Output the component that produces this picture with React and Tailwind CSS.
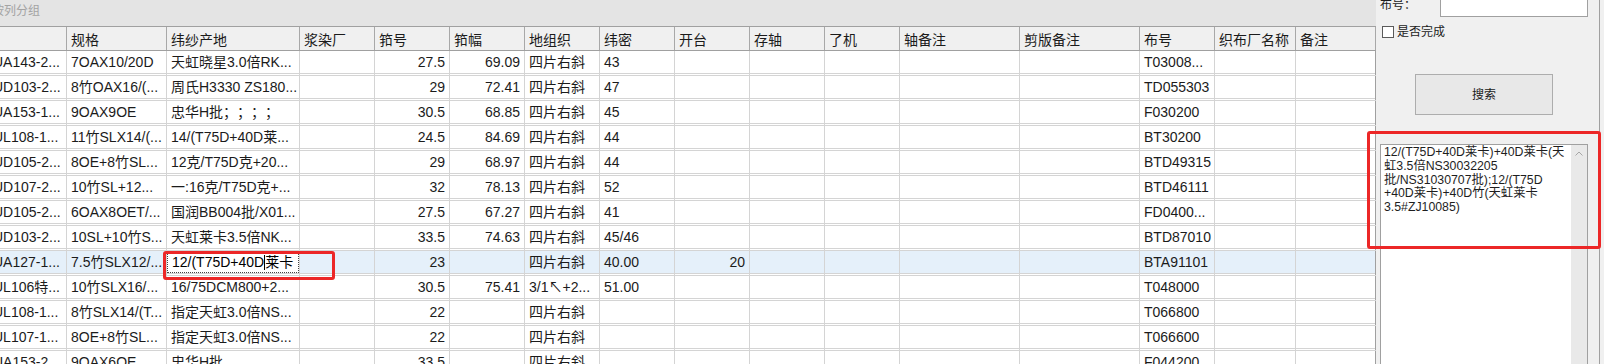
import React from "react";

const FONT = "font-['Liberation_Sans','Noto_Sans_CJK_SC',sans-serif]";

const COLS = [
  { w: "w-[80px]", first: true },
  { w: "w-[100px]" },
  { w: "w-[133px]" },
  { w: "w-[75px]" },
  { w: "w-[75px]", right: true },
  { w: "w-[75px]", right: true },
  { w: "w-[75px]" },
  { w: "w-[75px]" },
  { w: "w-[75px]", right: true },
  { w: "w-[75px]" },
  { w: "w-[75px]" },
  { w: "w-[120px]" },
  { w: "w-[120px]" },
  { w: "w-[75px]" },
  { w: "w-[81px]" },
  { w: "w-[80px]", last: true },
];

const HEADERS = ["", "规格", "纬纱产地", "浆染厂", "筘号", "筘幅", "地组织", "纬密", "开台", "存轴", "了机", "轴备注", "剪版备注", "布号", "织布厂名称", "备注"];

const EDIT = "__edit__";

const ROWS = [
  ["UA143-2...", "7OAX10/20D", "天虹晓星3.0倍RK...", "", "27.5", "69.09", "四片右斜", "43", "", "", "", "", "", "T03008...", "", ""],
  ["UD103-2...", "8竹OAX16/(...", "周氏H3330 ZS180...", "", "29", "72.41", "四片右斜", "47", "", "", "", "", "", "TD055303", "", ""],
  ["UA153-1...", "9OAX9OE", "忠华H批；；；；", "", "30.5", "68.85", "四片右斜", "45", "", "", "", "", "", "F030200", "", ""],
  ["UL108-1...", "11竹SLX14/(...", "14/(T75D+40D莱...", "", "24.5", "84.69", "四片右斜", "44", "", "", "", "", "", "BT30200", "", ""],
  ["UD105-2...", "8OE+8竹SL...", "12克/T75D克+20...", "", "29", "68.97", "四片右斜", "44", "", "", "", "", "", "BTD49315", "", ""],
  ["UD107-2...", "10竹SL+12...", "一:16克/T75D克+...", "", "32", "78.13", "四片右斜", "52", "", "", "", "", "", "BTD46111", "", ""],
  ["UD105-2...", "6OAX8OET/...", "国润BB004批/X01...", "", "27.5", "67.27", "四片右斜", "41", "", "", "", "", "", "FD0400...", "", ""],
  ["UD103-2...", "10SL+10竹S...", "天虹莱卡3.5倍NK...", "", "33.5", "74.63", "四片右斜", "45/46", "", "", "", "", "", "BTD87010", "", ""],
  ["UA127-1...", "7.5竹SLX12/...", EDIT, "", "23", "", "四片右斜", "40.00", "20", "", "", "", "", "BTA91101", "", ""],
  ["UL106特...", "10竹SLX16/...", "16/75DCM800+2...", "", "30.5", "75.41", "3/1↖+2...", "51.00", "", "", "", "", "", "T048000", "", ""],
  ["UL108-1...", "8竹SLX14/(T...", "指定天虹3.0倍NS...", "", "22", "", "四片右斜", "", "", "", "", "", "", "T066800", "", ""],
  ["UL107-1...", "8OE+8竹SL...", "指定天虹3.0倍NS...", "", "22", "", "四片右斜", "", "", "", "", "", "", "T066600", "", ""],
  ["UA153-2", "9OAX6OE", "忠华H批", "", "33.5", "", "四片右斜", "", "", "", "", "", "", "F044200", "", ""],
];

const NOTE = [
  "12/(T75D+40D莱卡)+40D莱卡(天",
  "虹3.5倍NS30032205",
  "批/NS31030707批);12/(T75D",
  "+40D莱卡)+40D竹(天虹莱卡",
  "3.5#ZJ10085)",
];

function HeaderRow() {
  return (
    <div className="flex h-[24px] border-b border-[#a0a0a0] bg-[#f0f0f0]">
      {COLS.map((c, i) => (
        <div
          key={i}
          className={`${c.w} flex h-full shrink-0 items-center overflow-hidden whitespace-nowrap border-r border-[#a8a8a8] pl-[4px] pt-[3px] text-[14px] leading-[20px]`}
        >
          {HEADERS[i]}
        </div>
      ))}
    </div>
  );
}

function EditCell() {
  return (
    <div className="flex h-[22px] items-center overflow-hidden whitespace-nowrap border border-dotted border-[#444] bg-white pl-[4px] text-[14px] leading-[20px] text-black">
      <span>12/(T75D+40D</span>
      <span className="inline-block h-[15px] w-[1px] bg-black" />
      <span>莱卡</span>
    </div>
  );
}

function Row({ cells, first, selected }) {
  return (
    <div className={first ? "flex h-[24px]" : "flex h-[25px] border-t border-[#d4d4d4]"}>
      {COLS.map((c, i) => (
        <div
          key={i}
          className={`${c.w} flex h-full shrink-0 flex-col border-r ${c.last ? "border-[#a0a0a0]" : "border-[#d4d4d4]"}`}
        >
          {cells[i] === EDIT ? (
            <EditCell />
          ) : (
            <div
              className={`flex h-[22px] items-center overflow-hidden whitespace-nowrap ${c.first ? "pl-[6px]" : "px-[4px]"} text-[14px] leading-[22px] [text-spacing-trim:space-all] ${
                c.right ? "justify-end" : ""
              } ${selected ? "bg-[#e5f0fa]" : "bg-white"}`}
            >
              {cells[i]}
            </div>
          )}
          <div className="h-[2px] border-t border-[#d4d4d4] bg-white" />
        </div>
      ))}
    </div>
  );
}

export default function App() {
  return (
    <div className={`relative flex h-[364px] w-[1604px] overflow-hidden bg-[#f0f0f0] text-[#1b1b1b] ${FONT}`}>
      {/* grid */}
      <div className="flex h-full w-[1376px] shrink-0 flex-col overflow-hidden bg-white">
        <div className="ml-[-13px] flex w-[1389px] shrink-0 flex-col">
          <div className="h-[27px] border-b border-[#a0a0a0] bg-[#e4e4e4] pl-[5px] pt-[3px] text-[12px] leading-[16px] text-[#a3a3a3]">
            按列分组
          </div>
          <HeaderRow />
          {ROWS.map((r, i) => (
            <Row key={i} cells={r} first={i === 0} selected={i === 8} />
          ))}
        </div>
      </div>

      {/* search panel */}
      <div className="flex h-full w-[228px] shrink-0">
        <div className="flex h-full w-[224px] flex-col border-r border-[#a0a0a0] pl-[4px] text-[12px]">
          <div className="mt-[-8px] flex h-[25px] shrink-0 items-center">
            <span className="w-[60px] leading-[16px]">布号：</span>
            <div className="h-[25px] w-[148px] border border-[#a0a0a0] bg-white" />
          </div>
          <div className="mt-[9px] flex h-[12px] shrink-0 items-center">
            <div className="ml-[2px] h-[12px] w-[12px] border border-[#5a5a5a] bg-white" />
            <span className="ml-[3px] leading-[14px]">是否完成</span>
          </div>
          <button className="ml-[35px] mt-[36px] h-[41px] w-[138px] shrink-0 border border-[#adadad] bg-[#e8e8e8] text-[12px] text-[#1b1b1b]">
            搜索
          </button>
          <div className="mt-[29px] flex h-[240px] w-[208px] shrink-0 border border-[#a0a0a0] bg-white">
            <div className="flex-1 pl-[3px] pt-[1px] text-[12.3px] leading-[13.8px] text-[#1e1e1e]">
              {NOTE.map((l, i) => (
                <div key={i} className="whitespace-nowrap">
                  {l}
                </div>
              ))}
            </div>
            <div className="flex w-[16px] justify-center bg-[#e9e9e9] pt-[6px]">
              <svg width="8" height="5" viewBox="0 0 8 5">
                <polyline points="0.5,4.5 4,1 7.5,4.5" fill="none" stroke="#a6a6a6" strokeWidth="1" />
              </svg>
            </div>
          </div>
        </div>
      </div>

      {/* annotation boxes */}
      <div className="pointer-events-none absolute left-[163px] top-[251px] h-[29px] w-[172px] rounded-[3px] border-[3px] border-[#ec2727]" />
      <div className="pointer-events-none absolute left-[1367px] top-[131px] h-[118px] w-[234px] rounded-[3px] border-[3px] border-[#ec2727]" />
    </div>
  );
}
